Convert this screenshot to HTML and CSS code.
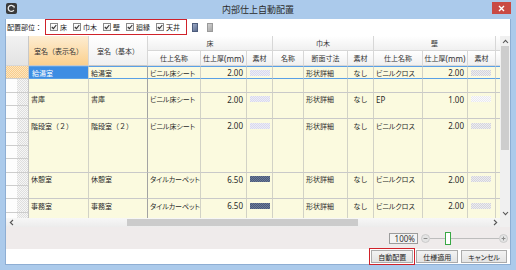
FILE: index.html
```html
<!DOCTYPE html>
<html lang="ja">
<head>
<meta charset="utf-8">
<title>内部仕上自動配置</title>
<link rel="stylesheet" href="styles.css">
</head>
<body>
<div class="window">
  <div class="titlebar">
    <span class="app-icon">
      <svg width="11" height="11" viewBox="0 0 11 11"><rect x="0" y="0" width="11" height="11" rx="2" fill="#3a3a3a"/><path d="M7.6 3.6 A3 3 0 1 0 7.8 7" fill="none" stroke="#e8e8e8" stroke-width="1.3"/><path d="M6.4 3 L8.4 3.4 L7.9 5.2" fill="none" stroke="#e8e8e8" stroke-width="1"/></svg>
    </span>
    <span class="title">内部仕上自動配置</span>
    <span class="close"><svg width="7" height="7" viewBox="0 0 7 7"><path d="M1 1 L6 6 M6 1 L1 6" stroke="#fff" stroke-width="1.4"/></svg></span>
  </div>
  <div class="client">
    <div class="toolbar">
      <span class="tb-label">配置部位：</span>
      <div class="parts">
        <label class="chk"><span class="box"><svg width="6" height="6" viewBox="0 0 6 6"><path d="M0.8 3 L2.4 4.7 L5.3 1" fill="none" stroke="#333" stroke-width="1.1"/></svg></span>床</label>
        <label class="chk"><span class="box"><svg width="6" height="6" viewBox="0 0 6 6"><path d="M0.8 3 L2.4 4.7 L5.3 1" fill="none" stroke="#333" stroke-width="1.1"/></svg></span>巾木</label>
        <label class="chk"><span class="box"><svg width="6" height="6" viewBox="0 0 6 6"><path d="M0.8 3 L2.4 4.7 L5.3 1" fill="none" stroke="#333" stroke-width="1.1"/></svg></span>壁</label>
        <label class="chk"><span class="box"><svg width="6" height="6" viewBox="0 0 6 6"><path d="M0.8 3 L2.4 4.7 L5.3 1" fill="none" stroke="#333" stroke-width="1.1"/></svg></span>廻縁</label>
        <label class="chk"><span class="box"><svg width="6" height="6" viewBox="0 0 6 6"><path d="M0.8 3 L2.4 4.7 L5.3 1" fill="none" stroke="#333" stroke-width="1.1"/></svg></span>天井</label>
      </div>
      <span class="tb-ico blue"></span>
      <span class="tb-ico gray"></span>
    </div>

    <div class="gridarea">
      <div class="view">
        <div class="ghead">
          <div class="h corner"></div>
          <div class="h tall key">室名（表示名）</div>
          <div class="h tall">室名（基本）</div>
          <div class="h g3">床</div>
          <div class="h g3">巾木</div>
          <div class="h g3">壁</div>
          <div class="h"></div>
          <div class="h">仕上名称</div>
          <div class="h">仕上厚<span class="lat">(mm)</span></div>
          <div class="h">素材</div>
          <div class="h">名称</div>
          <div class="h">断面寸法</div>
          <div class="h">素材</div>
          <div class="h">仕上名称</div>
          <div class="h">仕上厚<span class="lat">(mm)</span></div>
          <div class="h">素材</div>
          <div class="h"></div>
        </div>

        <div class="row sel">
          <div class="rh"></div>
          <div class="c cur">給湯室</div><div class="c sep">給湯室</div>
          <div class="c p">ビニル床シート</div><div class="c num">2.00</div><div class="c"><span class="sw lav"></span></div>
          <div class="c"></div><div class="c">形状詳細</div><div class="c ctr">なし</div>
          <div class="c p">ビニルクロス</div><div class="c num">2.00</div><div class="c"><span class="sw gry"></span></div>
          <div class="c"></div>
        </div>
        <div class="row end">
          <div class="rh"></div>
          <div class="c"></div><div class="c sep"></div>
          <div class="c"></div><div class="c"></div><div class="c"></div>
          <div class="c"></div><div class="c"></div><div class="c"></div>
          <div class="c"></div><div class="c"></div><div class="c"></div>
          <div class="c"></div>
        </div>

        <div class="row">
          <div class="rh"></div>
          <div class="c">書庫</div><div class="c sep">書庫</div>
          <div class="c p">ビニル床シート</div><div class="c num">2.00</div><div class="c"><span class="sw lav"></span></div>
          <div class="c"></div><div class="c">形状詳細</div><div class="c ctr">なし</div>
          <div class="c"><span class="lat">EP</span></div><div class="c num">1.00</div><div class="c"><span class="sw wht"></span></div>
          <div class="c"></div>
        </div>
        <div class="row end">
          <div class="rh"></div>
          <div class="c"></div><div class="c sep"></div>
          <div class="c"></div><div class="c"></div><div class="c"></div>
          <div class="c"></div><div class="c"></div><div class="c"></div>
          <div class="c"></div><div class="c"></div><div class="c"></div>
          <div class="c"></div>
        </div>

        <div class="row">
          <div class="rh"></div>
          <div class="c">階段室（２）</div><div class="c sep">階段室（２）</div>
          <div class="c p">ビニル床シート</div><div class="c num">2.00</div><div class="c"><span class="sw lav"></span></div>
          <div class="c"></div><div class="c">形状詳細</div><div class="c ctr">なし</div>
          <div class="c p">ビニルクロス</div><div class="c num">2.00</div><div class="c"><span class="sw gry"></span></div>
          <div class="c"></div>
        </div>
        <div class="row">
          <div class="rh"></div>
          <div class="c"></div><div class="c sep"></div>
          <div class="c"></div><div class="c"></div><div class="c"></div>
          <div class="c"></div><div class="c"></div><div class="c"></div>
          <div class="c"></div><div class="c"></div><div class="c"></div>
          <div class="c"></div>
        </div>
        <div class="row">
          <div class="rh"></div>
          <div class="c"></div><div class="c sep"></div>
          <div class="c"></div><div class="c"></div><div class="c"></div>
          <div class="c"></div><div class="c"></div><div class="c"></div>
          <div class="c"></div><div class="c"></div><div class="c"></div>
          <div class="c"></div>
        </div>
        <div class="row end">
          <div class="rh"></div>
          <div class="c"></div><div class="c sep"></div>
          <div class="c"></div><div class="c"></div><div class="c"></div>
          <div class="c"></div><div class="c"></div><div class="c"></div>
          <div class="c"></div><div class="c"></div><div class="c"></div>
          <div class="c"></div>
        </div>

        <div class="row">
          <div class="rh"></div>
          <div class="c">休憩室</div><div class="c sep">休憩室</div>
          <div class="c p">タイルカーペット</div><div class="c num">6.50</div><div class="c"><span class="sw drk"></span></div>
          <div class="c"></div><div class="c">形状詳細</div><div class="c ctr">なし</div>
          <div class="c p">ビニルクロス</div><div class="c num">2.00</div><div class="c"><span class="sw gry"></span></div>
          <div class="c"></div>
        </div>
        <div class="row end">
          <div class="rh"></div>
          <div class="c"></div><div class="c sep"></div>
          <div class="c"></div><div class="c"></div><div class="c"></div>
          <div class="c"></div><div class="c"></div><div class="c"></div>
          <div class="c"></div><div class="c"></div><div class="c"></div>
          <div class="c"></div>
        </div>

        <div class="row">
          <div class="rh"></div>
          <div class="c">事務室</div><div class="c sep">事務室</div>
          <div class="c p">タイルカーペット</div><div class="c num">6.50</div><div class="c"><span class="sw drk"></span></div>
          <div class="c"></div><div class="c">形状詳細</div><div class="c ctr">なし</div>
          <div class="c p">ビニルクロス</div><div class="c num">2.00</div><div class="c"><span class="sw gry"></span></div>
          <div class="c"></div>
        </div>
        <div class="row end">
          <div class="rh"></div>
          <div class="c"></div><div class="c sep"></div>
          <div class="c"></div><div class="c"></div><div class="c"></div>
          <div class="c"></div><div class="c"></div><div class="c"></div>
          <div class="c"></div><div class="c"></div><div class="c"></div>
          <div class="c"></div>
        </div>
      </div>

      <div class="vscroll">
        <span class="arr"><svg width="7" height="5" viewBox="0 0 7 5"><path d="M1 4 L3.5 1.3 L6 4" fill="none" stroke="#555" stroke-width="1.1"/></svg></span>
        <span class="vthumb"></span>
        <span class="vtrack"></span>
        <span class="arr"><svg width="7" height="5" viewBox="0 0 7 5"><path d="M1 1 L3.5 3.7 L6 1" fill="none" stroke="#555" stroke-width="1.1"/></svg></span>
      </div>

      <div class="hscroll">
        <span class="harr"><svg width="5" height="7" viewBox="0 0 5 7"><path d="M4 1 L1.3 3.5 L4 6" fill="none" stroke="#555" stroke-width="1.1"/></svg></span>
        <span class="htrack lead"></span>
        <span class="hthumb"></span>
        <span class="htrack"></span>
        <span class="harr"><svg width="5" height="7" viewBox="0 0 5 7"><path d="M1 1 L3.7 3.5 L1 6" fill="none" stroke="#555" stroke-width="1.1"/></svg></span>
      </div>
      <div class="corner-box"></div>
    </div>

    <div class="zoombar">
      <span class="zoomval lat">100%</span>
      <div class="slider">
        <span class="knob"><svg width="9" height="9" viewBox="0 0 9 9"><circle cx="4.5" cy="4.5" r="4" fill="#e4e4e4" stroke="#c4c4c4" stroke-width="0.8"/><path d="M2.6 4.5 H6.4" stroke="#8a8a8a" stroke-width="1"/></svg></span>
        <span class="line short"></span>
        <span class="thumb"></span>
        <span class="line"></span>
        <span class="knob"><svg width="9" height="9" viewBox="0 0 9 9"><circle cx="4.5" cy="4.5" r="4" fill="#e4e4e4" stroke="#c4c4c4" stroke-width="0.8"/><path d="M2.6 4.5 H6.4 M4.5 2.6 V6.4" stroke="#8a8a8a" stroke-width="1"/></svg></span>
      </div>
    </div>

    <div class="buttons">
      <button class="btn hl">自動配置</button>
      <button class="btn">仕様適用</button>
      <button class="btn p">キャンセル</button>
    </div>
  </div>
</div>
</body>
</html>
```

FILE: styles.css
```css
:root {
  --cols: 23px 60px 59px 53px 46px 26px 31px 44px 26px 49px 45px 28px 120px;
}

html, body {
  margin: 0;
  padding: 0;
}

body {
  width: 516px;
  height: 270px;
  overflow: hidden;
  font-family: "Noto Sans CJK JP", "Noto Sans", sans-serif;
  font-size: 7px;
  color: #222;
}

.p {
  font-feature-settings: "palt";
}

.lat {
  font-family: "Noto Sans", "Liberation Sans", sans-serif;
  font-size: 8px;
}

.window {
  width: 516px;
  height: 270px;
  box-sizing: border-box;
  background: #abcaeb;
  padding: 0 5px 5px;
  display: flex;
  flex-direction: column;
}

/* title bar */
.titlebar {
  height: 19px;
  flex: none;
  display: grid;
  grid-template-columns: 1fr auto 1fr;
  align-items: start;
}

.app-icon {
  margin: 3px 0 0 1px;
  height: 11px;
  display: flex;
}

.title {
  font-size: 9px;
  color: #2a2a2a;
  line-height: 19px;
}

.close {
  justify-self: end;
  width: 19px;
  height: 12px;
  margin-top: 2px;
  background: #c94a44;
  display: flex;
  align-items: center;
  justify-content: center;
}

/* client */
.client {
  flex: 1;
  background: #fff;
  border: 1px solid #8eaed3;
  border-top: 0;
  display: flex;
  flex-direction: column;
  min-height: 0;
}

.toolbar {
  height: 17px;
  flex: none;
  display: flex;
  align-items: flex-start;
  padding-left: 1px;
}

.tb-label {
  line-height: 16px;
  color: #222;
}

.parts {
  margin-left: 3px;
  height: 16px;
  box-sizing: border-box;
  border: 1px solid #d0222a;
  display: flex;
  align-items: center;
  gap: 6px;
  padding: 0 6px 0 4px;
}

.chk {
  display: flex;
  align-items: center;
  gap: 2px;
}

.box {
  width: 8px;
  height: 8px;
  box-sizing: border-box;
  border: 1px solid #8a8a8a;
  background: linear-gradient(#ffffff, #ececec);
  display: flex;
  align-items: center;
  justify-content: center;
}

.tb-ico {
  width: 6px;
  height: 9px;
  margin-top: 4px;
  box-sizing: border-box;
}

.tb-ico.blue {
  margin-left: 5px;
  background: linear-gradient(135deg, #9aa8c4, #5d6d90);
  border: 1px solid #4d5c7c;
}

.tb-ico.gray {
  margin-left: 9px;
  background: linear-gradient(135deg, #d0d0d0, #a8a8a8);
  border: 1px solid #9a9a9a;
}

/* grid */
.gridarea {
  flex: none;
  height: 191px;
  display: grid;
  grid-template-columns: 1fr 10px;
  grid-template-rows: 182px 9px;
}

.view {
  overflow: hidden;
  background: #fff;
  min-width: 0;
}

.ghead {
  display: grid;
  grid-template-columns: var(--cols);
  grid-template-rows: 15px 15px;
}

.h {
  box-sizing: border-box;
  border-right: 1px solid #d7d7d7;
  border-bottom: 1px solid #d7d7d7;
  background: linear-gradient(#ffffff, #f0f0f0);
  display: flex;
  align-items: center;
  justify-content: center;
  white-space: nowrap;
  overflow: hidden;
  color: #333;
}

.h.corner {
  grid-row: 1 / 3;
  background: linear-gradient(#f2f2f2, #e3e3e3);
  border-right-color: #c8c8c8;
}

.h.tall {
  grid-row: 1 / 3;
  border-bottom-color: #c8c8c8;
}

.h.key {
  background: linear-gradient(#fdedd2, #fbd08e);
}

.h.g3 {
  grid-column: span 3;
}

.row {
  display: grid;
  grid-template-columns: var(--cols);
  height: 13.33px;
}

.rh {
  box-sizing: border-box;
  border-right: 1px solid #c4c4c4;
  border-bottom: 1px solid #cdcdcd;
  background:
    linear-gradient(90deg, #fdfdfd 0 11px, transparent 11px),
    repeating-conic-gradient(#dedede 0 25%, #f6f6f6 0 50%) 0 0 / 2px 2px;
}

.c {
  box-sizing: border-box;
  border-right: 1px solid #d2d2c6;
  background: #fbfadf;
  display: flex;
  align-items: center;
  padding: 0 2px;
  white-space: nowrap;
  overflow: hidden;
  color: #2a2a2a;
}

.c.sep {
  border-right-color: #a3a3a3;
}

.c.num {
  justify-content: flex-end;
  padding-right: 3px;
  font-family: "Noto Sans", "Liberation Sans", sans-serif;
  font-size: 8px;
}

.c.ctr {
  justify-content: center;
}

.row.end .c {
  border-bottom: 1px solid #c9c9c9;
}

.row.sel .c {
  border-top: 1px solid #5aa0e6;
  border-bottom: 1px solid #5aa0e6;
}

.row.sel .rh {
  background: repeating-conic-gradient(#f8cd8c 0 25%, #fde5c0 0 50%) 0 0 / 2px 2px;
}

.c.cur {
  background: #3d8de3;
  color: #fff;
  padding-left: 3px;
}

.sw {
  width: 20px;
  height: 6px;
  margin-left: 1px;
}

.sw.lav {
  background: repeating-conic-gradient(#d9d9ee 0 25%, #ececf7 0 50%) 0 0 / 2px 2px;
}

.sw.gry {
  background: repeating-conic-gradient(#d4d4dc 0 25%, #ececf0 0 50%) 0 0 / 2px 2px;
}

.sw.wht {
  background: repeating-conic-gradient(#e9e9f0 0 25%, #fafafc 0 50%) 0 0 / 2px 2px;
}

.sw.drk {
  background: repeating-conic-gradient(#4b5a7a 0 25%, #6b7a98 0 50%) 0 0 / 2px 2px;
}

/* scrollbars */
.vscroll {
  grid-row: 1;
  grid-column: 2;
  display: flex;
  flex-direction: column;
  background: #f0f0f0;
}

.arr {
  height: 10px;
  flex: none;
  display: flex;
  align-items: center;
  justify-content: center;
}

.vthumb {
  height: 104px;
  flex: none;
  margin: 0 1px;
  background: #cdcdcd;
}

.vtrack {
  flex: 1;
}

.hscroll {
  grid-row: 2;
  grid-column: 1;
  display: flex;
  align-items: stretch;
  background: linear-gradient(#f7f7f7, #ececec);
}

.harr {
  width: 10px;
  flex: none;
  display: flex;
  align-items: center;
  justify-content: center;
}

.htrack {
  flex: 1;
}

.htrack.lead {
  flex: none;
  width: 111px;
}

.hthumb {
  width: 231px;
  flex: none;
  margin: 1px 0;
  background: #cbcbcb;
}

.corner-box {
  grid-row: 2;
  grid-column: 2;
  background: #f0f0f0;
}

/* zoom bar */
.zoombar {
  height: 22px;
  flex: none;
  background: #efebeb;
  display: flex;
  justify-content: flex-end;
  align-items: center;
  padding-right: 2px;
}

.zoomval {
  width: 29px;
  height: 11px;
  box-sizing: border-box;
  border: 1px solid #9c9c9c;
  background: #f3f3f3;
  display: flex;
  align-items: center;
  justify-content: flex-end;
  padding-right: 2px;
  color: #333;
  margin-right: 3px;
}

.slider {
  display: flex;
  align-items: center;
  width: 87px;
}

.knob {
  width: 9px;
  height: 9px;
  flex: none;
  display: flex;
}

.line {
  flex: 1;
  height: 1px;
  background: #bdbdbd;
}

.line.short {
  flex: none;
  width: 15px;
}

.thumb {
  width: 6px;
  height: 13px;
  box-sizing: border-box;
  border: 1px solid #39a845;
  background: #fff;
  flex: none;
}

/* buttons */
.buttons {
  flex: 1;
  display: flex;
  justify-content: flex-end;
  align-items: flex-start;
  gap: 3px;
  padding: 1px 3px 0 0;
}

.btn {
  height: 13px;
  box-sizing: border-box;
  border: 1px solid #ababab;
  background: linear-gradient(#f3f3f3, #e3e3e3);
  font-family: inherit;
  font-size: 7px;
  color: #222;
  padding: 0 6px;
  margin: 0;
  display: flex;
  align-items: center;
  justify-content: center;
  border-radius: 0;
}

.btn.hl {
  outline: 1px solid #d0222a;
  outline-offset: 1px;
}
```
